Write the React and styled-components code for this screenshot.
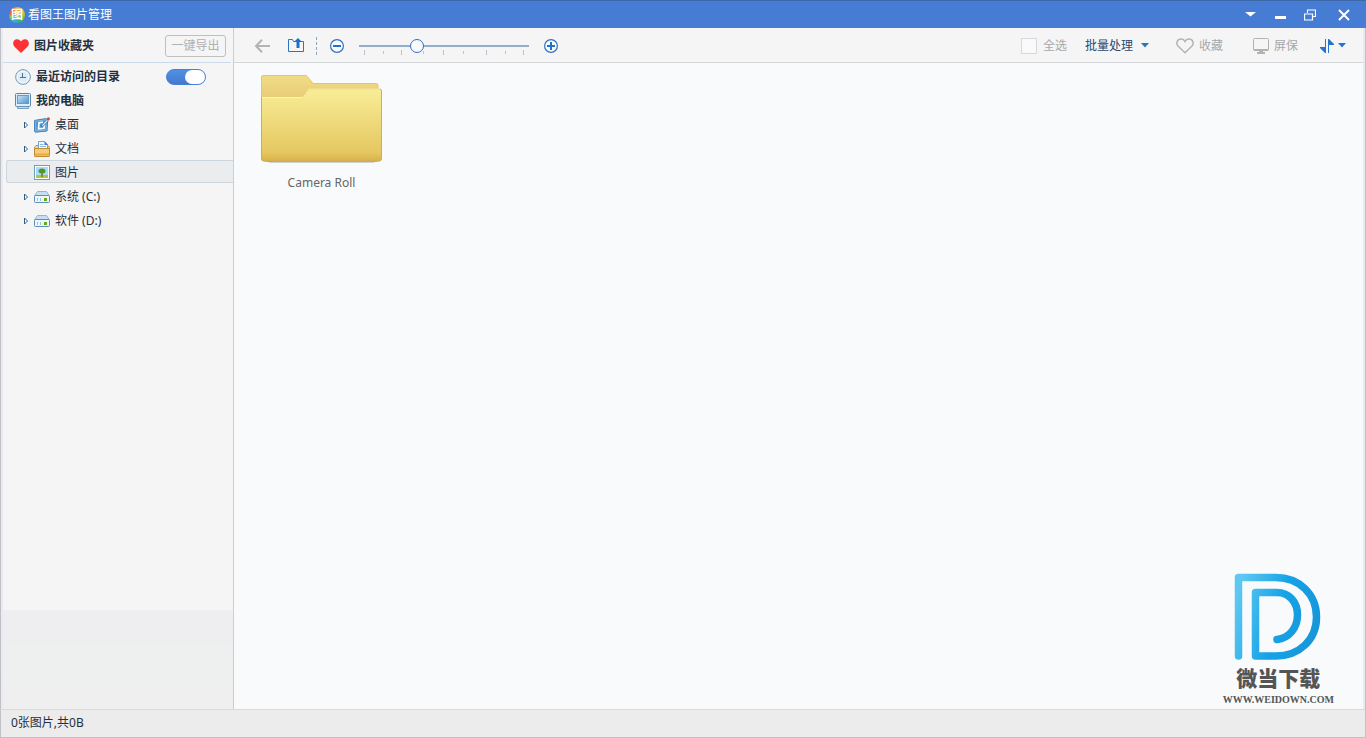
import { useState } from 'react';
import styled, { createGlobalStyle } from 'styled-components';

const GlobalStyle = createGlobalStyle`
  * {
    box-sizing: border-box;
  }

  body {
    margin: 0;
    background: #f8fafc;
    color: #1f3040;
    font-family: 'Noto Sans', 'Noto Sans CJK SC', sans-serif;
    font-size: 12px;
    line-height: 16px;
  }

  button,
  input {
    margin: 0;
    padding: 0;
    font: inherit;
    color: inherit;
  }

  svg {
    display: block;
    flex: none;
  }
`;

const Window = styled.div`
  display: flex;
  flex-direction: column;
  min-height: 100vh;
`;

const TitleBar = styled.header`
  display: flex;
  align-items: center;
  height: 28px;
  padding: 0 3px 0 9px;
  background: #467cd4;
  border-top: 1px solid #3d68a8;
  color: #fff;
`;

const AppIcon = styled.span`
  display: flex;
  align-items: center;
  justify-content: center;
  width: 16px;
  height: 16px;
  margin-right: 3px;
  border-radius: 50%;
  background: conic-gradient(#f3a13a, #f0c53e 40deg, #b5c93e 80deg, #5fbb4a 130deg, #36b37a 160deg, #3aa0dc 190deg, #45c0c0 230deg, #8fc63e 255deg, #e8584a 280deg, #ee6a3a 330deg, #f3a13a);
  font-size: 12px;
  font-weight: 700;
`;

const Title = styled.h1`
  flex: 1;
  margin: 0;
  font-size: 12px;
  font-weight: 400;
`;

const WindowButton = styled.button`
  display: flex;
  align-items: center;
  justify-content: center;
  width: ${(props) => (props.$wide ? '38px' : '30px')};
  height: 26px;
  border: 0;
  background: none;
`;

const Body = styled.div`
  display: flex;
  flex: 1;
  border: 1px solid #c0c1c5;
  border-width: 0 1px;
`;

const Sidebar = styled.nav`
  display: flex;
  flex-direction: column;
  width: 233px;
  flex: none;
  padding-left: 2px;
  border-right: 1px solid #c8ced4;
  background: #f5f5f5;
  box-shadow: inset 2px 0 #e8ebf2;
`;

const Favorites = styled.div`
  display: flex;
  align-items: center;
  height: 35px;
  margin-right: 2px;
  padding: 2px 5px 0 10px;
  border-bottom: 1px solid #cadaeb;
  font-weight: 700;

  svg {
    margin-right: 5px;
  }
`;

const ExportButton = styled.button`
  width: 61px;
  height: 22px;
  margin-left: auto;
  border: 1px solid #bfbfbf;
  border-radius: 3px;
  background: #f5f5f5;
  color: #b0b0b0;
  font-weight: 400;
`;

const Tree = styled.ul`
  flex: 1;
  margin: 0;
  padding: 1px 0 0;
  list-style: none;
`;

const RootRow = styled.li`
  display: flex;
  align-items: center;
  gap: 5px;
  height: 24px;
  padding: 2px 27px 0 12px;
  font-weight: 700;

  label {
    flex: 1;
  }
`;

const Switch = styled.input`
  appearance: none;
  display: flex;
  align-items: center;
  justify-content: ${(props) => (props.checked ? 'flex-end' : 'flex-start')};
  width: 40px;
  height: 16px;
  border: 1px solid #4580d6;
  border-radius: 8px;
  background: ${(props) => (props.checked ? 'linear-gradient(#4f92e4, #4478cf)' : '#c4c9d0')};

  &::before {
    content: '';
    width: 20px;
    height: 14px;
    border-radius: 7px;
    background: #fff;
  }
`;

const FolderRow = styled.li`
  margin-left: 3px;
  height: 24px;
  padding-bottom: ${(props) => (props.$selected ? '1px' : 0)};
`;

const FolderButton = styled.button`
  display: flex;
  align-items: center;
  width: 100%;
  height: 100%;
  padding: 2px 0 0 17px;
  border: 1px solid ${(props) => (props.$selected ? '#cdd6dd' : 'transparent')};
  border-right: 0;
  border-radius: 3px 0 0 3px;
  background: ${(props) => (props.$selected ? '#ebecee' : 'transparent')};
  text-align: left;
`;

const Expander = styled.span`
  width: 10px;
`;

const FolderIcon = styled.span`
  width: 21px;
`;

const SidebarPreview = styled.div`
  height: 99px;
  background: linear-gradient(#eeeef0 35%, #eef0ef 36%, #eef0ef 60%, #efefef 80%);
`;

const Main = styled.main`
  display: flex;
  flex: 1;
  flex-direction: column;
  position: relative;
  background: #f8fafc;
  box-shadow: inset -2px 0 #e6eaf3;
`;

const Toolbar = styled.div`
  display: flex;
  align-items: center;
  height: 35px;
  padding: 1px 17px 0 20px;
  margin-right: 2px;
  border-bottom: 1px solid #d5d6d9;
  background: #f5f5f5;
`;

const ToolButton = styled.button`
  display: flex;
  align-items: center;
  gap: ${(props) => props.$gap || 0}px;
  margin-right: ${(props) => props.$after || 0}px;
  border: 0;
  background: none;
  color: ${(props) => (props.disabled ? '#a5a8ab' : '#274a70')};
`;

const Separator = styled.span`
  height: 18px;
  margin-right: 13px;
  border-left: 1px dashed #8fa3ba;
`;

const ZoomControl = styled.div`
  position: relative;
  width: 170px;
  height: 20px;
  margin-right: 15px;

  svg {
    position: absolute;
    left: 0;
    top: 14px;
  }
`;

const ZoomSlider = styled.input`
  position: relative;
  z-index: 1;
  appearance: none;
  display: block;
  width: 100%;
  height: 20px;
  background: linear-gradient(#93aecb, #93aecb) center / 100% 2px no-repeat;

  &::-webkit-slider-thumb {
    appearance: none;
    width: 14px;
    height: 14px;
    border: 1px solid #2e6fc4;
    border-radius: 50%;
    background: #f8fafc;
  }
`;

const SelectAll = styled.label`
  display: flex;
  align-items: center;
  gap: 6px;
  margin: 0 18px 0 auto;
  color: #a5a8ab;

  input {
    appearance: none;
    width: 16px;
    height: 16px;
    border: 1px solid #d5d8dd;
    background: #fafafb;
  }
`;

const Gallery = styled.div`
  display: flex;
  flex-wrap: wrap;
  padding: 12px 27px;
`;

const FolderTile = styled.figure`
  display: flex;
  flex-direction: column;
  align-items: center;
  gap: 12px;
  margin: 0;
  color: #666;
`;

const Watermark = styled.div`
  position: absolute;
  right: 31px;
  bottom: 1px;
  display: flex;
  flex-direction: column;
  align-items: center;
  color: #555;
`;

const WatermarkName = styled.div`
  margin-top: 5px;
  font-size: 21px;
  font-weight: 900;
  line-height: 24px;
`;

const WatermarkUrl = styled.div`
  margin-top: 2px;
  font-family: 'Liberation Serif', serif;
  font-size: 10px;
  font-weight: 700;
  line-height: 16px;
`;

const StatusBar = styled.footer`
  height: 29px;
  padding: 5px 10px;
  border: 1px solid #c0c1c5;
  border-top-color: #dadada;
  background: #ececec;
`;

const Caret = ({ width = 8, color = '#2f74b8' }) => (
  <svg width={width} height="5" viewBox="0 0 8 5" preserveAspectRatio="none">
    <path d="M0 0h8L4 4.5z" fill={color} />
  </svg>
);

const HeartSolid = () => (
  <svg width="16" height="14" viewBox="0 0 16 14">
    <path d="M8 14 1.3 7.5C-1 4.5.3.3 4 .3 6 .3 7.3 1.400 8 2.500 8.700 1.400 10 .3 12 .3c3.700 0 5 4.200 2.700 7.200z" fill="#fb3335" />
  </svg>
);

const ClockIcon = () => (
  <svg width="16" height="16" viewBox="0 0 16 16">
    <circle cx="8" cy="8" r="7.400" fill="#d9e8f3" stroke="#7d9fbd" />
    <circle cx="8" cy="8" r="5.800" fill="#dfebf5" stroke="#f7fbfe" />
    <path d="M7.500 4v5M5 8.500h6" stroke="#477296" fill="none" />
  </svg>
);

const ComputerIcon = () => (
  <svg width="16" height="16" viewBox="0 0 16 16">
    <defs>
      <linearGradient id="screen" x2="1" y2="1">
        <stop stopColor="#c9e7fa" />
        <stop offset="1" stopColor="#4f90cc" />
      </linearGradient>
    </defs>
    <rect x=".5" y=".5" width="15" height="13" rx="1" fill="#dceefa" stroke="#5a88ad" />
    <rect x="2.500" y="2.500" width="11" height="8" fill="url(#screen)" stroke="#6a9cc6" />
    <path d="M3 13.500h10l.5 2h-11z" fill="#c5dcec" stroke="#5f8db2" strokeWidth=".8" />
  </svg>
);

const DesktopIcon = () => (
  <svg width="16" height="16" viewBox="0 0 16 16">
    <path d="m.6 3.400 11.400-1.800 1.700 1.400-.7 11-11.400 1.200q-1 0-1-1z" fill="#7db9e6" stroke="#3f7fb2" />
    <path d="m2 4.700 10-1.400-.6 9.200-9.400 1z" fill="#4e98d6" />
    <path d="M9 5.200 5 5.800 4.500 11.800l5.500-.6.400-3.200" fill="none" stroke="#fff" strokeWidth="1.600" />
    <path d="m13 2.500-5 5.200-.8 2 2.200-.7 5-5.200z" fill="#e8f4fb" stroke="#2a699c" strokeWidth=".8" />
    <circle cx="14.400" cy="1.700" r="1.500" fill="#e53b3b" />
  </svg>
);

const DocumentsIcon = () => (
  <svg width="16" height="16" viewBox="0 0 16 16">
    <path d="M.5 6.500 2 4.500h12l1.500 2v8q0 1-1 1h-13q-1 0-1-1z" fill="#f6d58c" stroke="#c18a34" />
    <path d="M4.500.5h6l3 3V9h-9z" fill="#f4f9fe" stroke="#6ca4d6" />
    <path d="M10.500 0v4H14z" fill="#3686d8" />
    <path d="M6 3.500h3.500M6 5.500h6" stroke="#92b6d5" />
    <path d="M.5 7.500h15v7q0 1-1 1h-13q-1 0-1-1z" fill="#f4cb78" fillOpacity=".9" stroke="#c18a34" />
    <path d="M1 12.500h14v2H1z" fill="#e6ac42" />
  </svg>
);

const PicturesIcon = () => (
  <svg width="16" height="15" viewBox="0 0 16 15">
    <rect x=".5" y=".5" width="15" height="14" fill="#fff" stroke="#6f9cbf" />
    <path d="M2 2h12v9H2z" fill="#a7dcfa" />
    <path d="M2 10h12v3H2z" fill="#a5cf39" />
    <path d="M8 7v5" stroke="#a95f22" strokeWidth="1.500" />
    <ellipse cx="8" cy="6" rx="3.500" ry="2.500" fill="#4f991f" />
  </svg>
);

const DriveIcon = () => (
  <svg width="16" height="12" viewBox="0 0 16 12">
    <path d="M3.500.5h9l3 4.500H.5z" fill="#c6dff2" stroke="#8fb8d8" />
    <rect x=".5" y="4.500" width="15" height="7" rx="1" fill="#edf6fc" stroke="#5d8eb5" />
    <path d="M3.500 7v3M6.500 7v3" stroke="#a5bfd2" />
    <path d="M10 7h3v3h-3z" fill="#66aa1d" />
  </svg>
);

const ExpandArrow = () => (
  <svg width="4" height="8" viewBox="0 0 4 8">
    <path d="M.5 1v6l3-3z" fill="#fff" stroke="#355e82" />
  </svg>
);

const BackIcon = () => (
  <svg width="16" height="14" viewBox="0 0 16 14">
    <path d="M8 .8 2 7 8 13.200M2.500 7H16" fill="none" stroke="#b1b3b5" strokeWidth="2" />
  </svg>
);

const FolderUpIcon = () => (
  <svg width="16" height="15" viewBox="0 0 16 15">
    <path d="M7 3.500H5.500l-1-2h-4v12h15v-10H13" fill="none" stroke="#2d73bf" />
    <path d="M10 0 6 4h2.500v6h3V4H14z" fill="#1f70cb" />
  </svg>
);

const ZoomIcon = ({ plus }) => (
  <svg width="14" height="14" viewBox="0 0 14 14">
    <circle cx="7" cy="7" r="6.400" fill="#f8fafc" stroke="#2e6fc4" strokeWidth="1.200" />
    <path d={plus ? 'M3 7h8M7 3v8' : 'M3 7h8'} stroke="#2371cc" strokeWidth="2" />
  </svg>
);

const HeartOutline = () => (
  <svg width="18" height="16" viewBox="0 0 18 16">
    <path d="M9 14.800 2 8C-.5 5 1.500 1 5 1c2 0 3.300 1 4 2.500C9.700 2 11 1 13 1c3.500 0 5.500 4 3 7z" fill="none" stroke="#b2b4b6" strokeWidth="1.500" />
  </svg>
);

const MonitorIcon = () => (
  <svg width="16" height="16" viewBox="0 0 16 16">
    <rect x=".5" y=".5" width="15" height="12" rx="1" fill="none" stroke="#b1b2b4" />
    <path d="M1 11h14v2H1zM6 13h4v1h2v2H4v-2h2z" fill="#b1b2b4" />
  </svg>
);

const SortIcon = () => (
  <svg width="14" height="14" viewBox="0 0 14 14">
    <path d="M5 0h1v14H5L0 9V8h5zM8 0h1l5 5v1H9v8H8z" fill="#2673d1" />
  </svg>
);

const FolderArt = () => (
  <svg width="121" height="88" viewBox="0 0 121 88">
    <defs>
      <linearGradient id="folderBack" x2="0" y2="1">
        <stop stopColor="#f0dc86" />
        <stop offset=".3" stopColor="#e8cb74" />
      </linearGradient>
      <linearGradient id="folderFront" x2="0" y2="1">
        <stop stopColor="#f8ee96" />
        <stop offset=".15" stopColor="#f5e78e" />
        <stop offset=".88" stopColor="#e5c761" />
        <stop offset="1" stopColor="#d9b147" />
      </linearGradient>
    </defs>
    <path d="M2 86h117l-7 1.500H9z" fill="#777" opacity=".6" />
    <path d="M.5 84V2Q.5.5 2 .5h43.500l6.500 8h63.500q1.500 0 1.500 2V84z" fill="url(#folderBack)" stroke="#e0c672" />
    <path d="M.5 22.500h41.500l6-8.500H118.500q2 0 2 2V84q0 2-2 2h-116q-2 0-2-2z" fill="url(#folderFront)" stroke="#cfae56" />
    <path d="M1 22.500h41l6-8.500h71" fill="none" stroke="#fff5b1" />
  </svg>
);

const BrandMark = () => (
  <svg width="88" height="88" viewBox="0 0 88 88">
    <defs>
      <linearGradient id="brand" gradientUnits="userSpaceOnUse" x1="0" y1="30" x2="88" y2="55">
        <stop stopColor="#5fc8f2" />
        <stop offset=".5" stopColor="#16a3e6" />
        <stop offset="1" stopColor="#1795d9" />
      </linearGradient>
    </defs>
    <g fill="none" stroke="url(#brand)" strokeWidth="7.500" strokeLinecap="round" strokeLinejoin="round">
      <path d="M4.500 83V4.500H42C65 4.500 82.500 21 82.500 44S65 83 42 83H21.500V19.500H43C55 19.500 63.500 29 63.500 42S55 65 43 66.500" />
    </g>
  </svg>
);

const folders = [
  { name: '桌面', icon: DesktopIcon, expandable: true },
  { name: '文档', icon: DocumentsIcon, expandable: true },
  { name: '图片', icon: PicturesIcon, expandable: false },
  { name: '系统 (C:)', icon: DriveIcon, expandable: true },
  { name: '软件 (D:)', icon: DriveIcon, expandable: true },
];

// tick positions along the zoom track, every second one is shorter
const ticks = [5, 24, 42, 64, 84, 104, 127, 146, 164];

const App = () => {
  const [selected, setSelected] = useState('图片');
  const [showRecent, setShowRecent] = useState(true);
  const [zoom, setZoom] = useState(33);

  return (
    <Window>
      <GlobalStyle />
      <TitleBar>
        <AppIcon>图</AppIcon>
        <Title>看图王图片管理</Title>
        <WindowButton aria-label="菜单">
          <Caret width={11} color="#fff" />
        </WindowButton>
        <WindowButton aria-label="最小化">
          <svg width="12" height="12" viewBox="0 0 12 12">
            <path d="M1 7h11v3H1z" fill="#fff" />
          </svg>
        </WindowButton>
        <WindowButton aria-label="还原">
          <svg width="12" height="12" viewBox="0 0 12 12">
            <path d="M3.500 4V1h8v6.500H9M3 1h9M.5 5h8v6h-8zM0 5h9" fill="none" stroke="#fff" strokeWidth="1.200" />
          </svg>
        </WindowButton>
        <WindowButton $wide aria-label="关闭">
          <svg width="12" height="12" viewBox="0 0 12 12">
            <path d="m1 1 10 10M11 1 1 11" stroke="#fff" strokeWidth="2" />
          </svg>
        </WindowButton>
      </TitleBar>

      <Body>
        <Sidebar>
          <Favorites>
            <HeartSolid />
            图片收藏夹
            <ExportButton>一键导出</ExportButton>
          </Favorites>
          <Tree>
            <RootRow>
              <ClockIcon />
              <label htmlFor="recent">最近访问的目录</label>
              <Switch
                id="recent"
                type="checkbox"
                checked={showRecent}
                onChange={(e) => setShowRecent(e.target.checked)}
              />
            </RootRow>
            <RootRow>
              <ComputerIcon />
              我的电脑
            </RootRow>
            {folders.map(({ name, icon: Icon, expandable }) => (
              <FolderRow key={name} $selected={selected === name}>
                <FolderButton $selected={selected === name} onClick={() => setSelected(name)}>
                  <Expander>{expandable && <ExpandArrow />}</Expander>
                  <FolderIcon>
                    <Icon />
                  </FolderIcon>
                  {name}
                </FolderButton>
              </FolderRow>
            ))}
          </Tree>
          <SidebarPreview />
        </Sidebar>

        <Main>
          <Toolbar>
            <ToolButton disabled $after={18} aria-label="后退">
              <BackIcon />
            </ToolButton>
            <ToolButton $after={12} aria-label="上一级">
              <FolderUpIcon />
            </ToolButton>
            <Separator />
            <ToolButton $after={15} aria-label="缩小">
              <ZoomIcon />
            </ToolButton>
            <ZoomControl>
              <ZoomSlider
                type="range"
                aria-label="缩放"
                value={zoom}
                onChange={(e) => setZoom(Number(e.target.value))}
              />
              <svg width="170" height="5" viewBox="0 0 170 5">
                {ticks.map((x, i) => (
                  <path key={x} d={i % 2 ? `M${x}.5 1v3` : `M${x}.5 0v5`} stroke="#b9c4d0" />
                ))}
              </svg>
            </ZoomControl>
            <ToolButton aria-label="放大">
              <ZoomIcon plus />
            </ToolButton>

            <SelectAll>
              <input type="checkbox" />
              全选
            </SelectAll>
            <ToolButton $gap={8} $after={27}>
              批量处理
              <Caret />
            </ToolButton>
            <ToolButton disabled $gap={5} $after={30}>
              <HeartOutline />
              收藏
            </ToolButton>
            <ToolButton disabled $gap={5} $after={22}>
              <MonitorIcon />
              屏保
            </ToolButton>
            <ToolButton $gap={4} aria-label="排序">
              <SortIcon />
              <Caret color="#2673d1" />
            </ToolButton>
          </Toolbar>

          <Gallery>
            <FolderTile>
              <FolderArt />
              <figcaption>Camera Roll</figcaption>
            </FolderTile>
          </Gallery>

          <Watermark>
            <BrandMark />
            <WatermarkName>微当下载</WatermarkName>
            <WatermarkUrl>WWW.WEIDOWN.COM</WatermarkUrl>
          </Watermark>
        </Main>
      </Body>

      <StatusBar>0张图片,共0B</StatusBar>
    </Window>
  );
};

export default App;
